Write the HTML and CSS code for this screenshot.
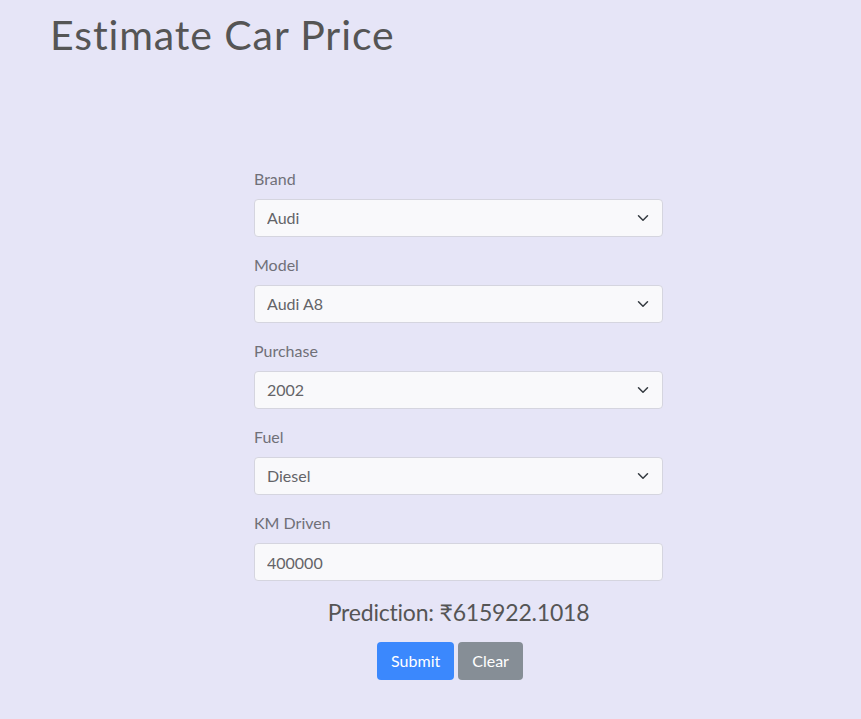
FILE: index.html
```html
<!DOCTYPE html>
<html>
<head>
<meta charset="utf-8">
<title>Estimate Car Price</title>
<link rel="stylesheet" href="styles.css">
</head>
<body>
<h1 class="title">Estimate Car Price</h1>
<div class="wrap">
  <form class="form">
    <div class="group">
      <label class="label">Brand</label>
      <div class="select-box">
        <select class="control"><option>Audi</option></select>
        <svg class="chev" width="16" height="12" viewBox="0 0 16 16"><path d="m2 5 6 6 6-6" fill="none" stroke="#343a40" stroke-width="2" stroke-linecap="round" stroke-linejoin="round"/></svg>
      </div>
    </div>
    <div class="group">
      <label class="label">Model</label>
      <div class="select-box">
        <select class="control"><option>Audi A8</option></select>
        <svg class="chev" width="16" height="12" viewBox="0 0 16 16"><path d="m2 5 6 6 6-6" fill="none" stroke="#343a40" stroke-width="2" stroke-linecap="round" stroke-linejoin="round"/></svg>
      </div>
    </div>
    <div class="group">
      <label class="label">Purchase</label>
      <div class="select-box">
        <select class="control"><option>2002</option></select>
        <svg class="chev" width="16" height="12" viewBox="0 0 16 16"><path d="m2 5 6 6 6-6" fill="none" stroke="#343a40" stroke-width="2" stroke-linecap="round" stroke-linejoin="round"/></svg>
      </div>
    </div>
    <div class="group">
      <label class="label">Fuel</label>
      <div class="select-box">
        <select class="control"><option>Diesel</option></select>
        <svg class="chev" width="16" height="12" viewBox="0 0 16 16"><path d="m2 5 6 6 6-6" fill="none" stroke="#343a40" stroke-width="2" stroke-linecap="round" stroke-linejoin="round"/></svg>
      </div>
    </div>
    <div class="group">
      <label class="label">KM Driven</label>
      <input class="control" type="text" value="400000">
    </div>
    <h4 class="prediction">Prediction: ₹615922.1018</h4>
    <div class="buttons">
      <button type="button" class="btn btn-primary">Submit</button>
      <button type="button" class="btn btn-secondary">Clear</button>
    </div>
  </form>
</div>
</body>
</html>
```

FILE: styles.css
```css
* { box-sizing: border-box; }
html, body { height: 100%; }
body {
  margin: 0;
  background: #e6e5f7;
  font-family: "Lato", "Noto Sans", sans-serif;
  color: #555;
}
.title {
  margin: 0;
  padding: 10px 0 0 50px;
  font-size: 41px;
  font-weight: 400;
  letter-spacing: 0.9px;
  line-height: 1.2;
  color: #555;
}
.wrap {
  padding: 108px 0 0 254px;
}
.form {
  width: 409px;
}
.group {
  margin-bottom: 16px;
}
.label {
  display: block;
  font-size: 16px;
  line-height: 24px;
  margin-bottom: 8px;
  color: #707078;
}
.select-box {
  position: relative;
}
.control {
  display: block;
  width: 100%;
  height: 38px;
  padding: 6px 12px;
  font-family: inherit;
  font-size: 16px;
  line-height: 24px;
  color: #646468;
  background: #f9f9fb;
  border: 1px solid #d5d5df;
  border-radius: 4px;
  appearance: none;
  -webkit-appearance: none;
  outline: none;
}
.chev {
  position: absolute;
  right: 12px;
  top: 13px;
  pointer-events: none;
}
.prediction {
  margin: 18px 0 15px;
  text-align: center;
  font-size: 23px;
  font-weight: 400;
  letter-spacing: -0.2px;
  line-height: 1.2;
  color: #555;
}
.buttons {
  display: flex;
  justify-content: center;
  gap: 4px;
  padding-right: 17px;
}
.btn {
  height: 38px;
  padding: 6px 13px;
  font-family: inherit;
  font-size: 16px;
  line-height: 24px;
  color: #fff;
  border: 1px solid transparent;
  border-radius: 4px;
}
.btn-primary { background: #3b88fd; }
.btn-secondary { background: #868e96; }
```
